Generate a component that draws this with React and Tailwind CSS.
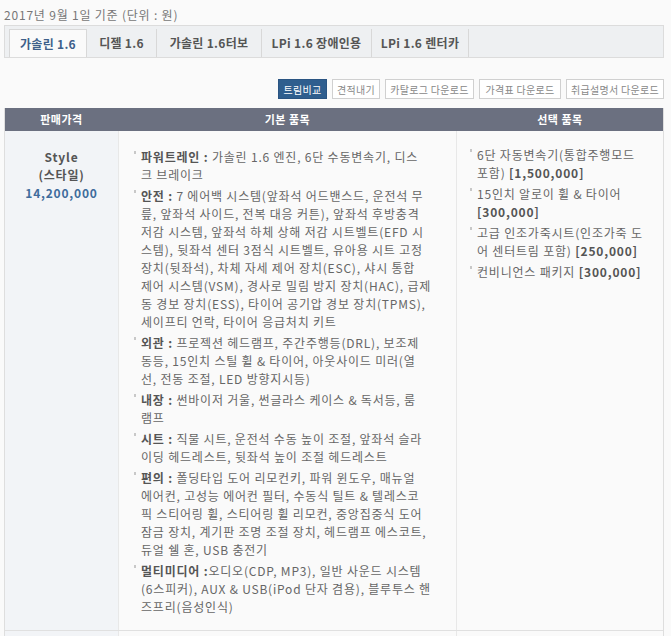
import React from 'react';

const tabs = [
  { label: '가솔린 1.6', w: 'w-[78px]', active: true },
  { label: '디젤 1.6', w: 'w-[70px]' },
  { label: '가솔린 1.6터보', w: 'w-[105px]' },
  { label: 'LPi 1.6 장애인용', w: 'w-[110px]' },
  { label: 'LPi 1.6 렌터카', w: 'w-[97px]' },
];

const buttons = [
  { label: '트림비교', w: 'w-[49px]', active: true },
  { label: '견적내기', w: 'w-[48px]' },
  { label: '카탈로그 다운로드', w: 'w-[89px]' },
  { label: '가격표 다운로드', w: 'w-[82px]' },
  { label: '취급설명서 다운로드', w: 'w-[98px]' },
];

const basicItems = [
  {
    label: '파워트레인 :',
    lines: [' 가솔린 1.6 엔진, 6단 수동변속기, 디스', '크 브레이크'],
  },
  {
    label: '안전 :',
    lines: [
      ' 7 에어백 시스템(앞좌석 어드밴스드, 운전석 무',
      '릎, 앞좌석 사이드, 전복 대응 커튼), 앞좌석 후방충격',
      '저감 시스템, 앞좌석 하체 상해 저감 시트벨트(EFD 시',
      '스템), 뒷좌석 센터 3점식 시트벨트, 유아용 시트 고정',
      '장치(뒷좌석), 차체 자세 제어 장치(ESC), 샤시 통합',
      '제어 시스템(VSM), 경사로 밀림 방지 장치(HAC), 급제',
      '동 경보 장치(ESS), 타이어 공기압 경보 장치(TPMS),',
      '세이프티 언락, 타이어 응급처치 키트',
    ],
  },
  {
    label: '외관 :',
    lines: [
      ' 프로젝션 헤드램프, 주간주행등(DRL), 보조제',
      '동등, 15인치 스틸 휠 & 타이어, 아웃사이드 미러(열',
      '선, 전동 조절, LED 방향지시등)',
    ],
  },
  {
    label: '내장 :',
    lines: [' 썬바이저 거울, 썬글라스 케이스 & 독서등, 룸', '램프'],
  },
  {
    label: '시트 :',
    lines: [' 직물 시트, 운전석 수동 높이 조절, 앞좌석 슬라', '이딩 헤드레스트, 뒷좌석 높이 조절 헤드레스트'],
  },
  {
    label: '편의 :',
    lines: [
      ' 폴딩타입 도어 리모컨키, 파워 윈도우, 매뉴얼',
      '에어컨, 고성능 에어컨 필터, 수동식 틸트 & 텔레스코',
      '픽 스티어링 휠, 스티어링 휠 리모컨, 중앙집중식 도어',
      '잠금 장치, 계기판 조명 조절 장치, 헤드램프 에스코트,',
      '듀얼 쉘 혼, USB 충전기',
    ],
  },
  {
    label: '멀티미디어 :',
    lines: [
      '오디오(CDP, MP3), 일반 사운드 시스템',
      '(6스피커), AUX & USB(iPod 단자 겸용), 블루투스 핸',
      '즈프리(음성인식)',
    ],
  },
];

const options = [
  { lines: ['6단 자동변속기(통합주행모드', '포함) '], price: '[1,500,000]' },
  { lines: ['15인치 알로이 휠 & 타이어', ''], price: '[300,000]' },
  { lines: ['고급 인조가죽시트(인조가죽 도', '어 센터트림 포함) '], price: '[250,000]' },
  { lines: ['컨비니언스 패키지 '], price: '[300,000]' },
];

function Bullet() {
  return <span className="mt-[3px] h-[3px] w-[2px] shrink-0 bg-[#c8c8c8]" />;
}

function BasicItem({ item }) {
  return (
    <li className="flex gap-[5px]">
      <Bullet />
      <div className="whitespace-pre">
        {item.lines.map((line, i) => (
          <div key={i}>
            {i === 0 && <b className="font-bold text-[#555]">{item.label}</b>}
            {line}
          </div>
        ))}
      </div>
    </li>
  );
}

function OptionItem({ item }) {
  const last = item.lines.length - 1;
  return (
    <li className="flex gap-[5px]">
      <Bullet />
      <div className="whitespace-pre">
        {item.lines.map((line, i) => (
          <div key={i}>
            {line}
            {i === last && <b className="font-bold text-[#555]">{item.price}</b>}
          </div>
        ))}
      </div>
    </li>
  );
}

export default function App() {
  return (
    <div className="min-h-screen bg-[#fafafa] px-[4px] pt-[7px] font-['Noto_Sans_CJK_KR','Noto_Sans',sans-serif] text-[12px] text-[#666]">
      <p className="leading-[16px] tracking-[0.8px] text-[#777]">2017년 9월 1일 기준 (단위 : 원)</p>

      {/* tabs */}
      <div className="mt-[2px] flex h-[33px] w-[660px] items-end border border-[#dcdcdc] bg-[#eef0f2] pl-[4px]">
        {tabs.map((t) => (
          <div
            key={t.label}
            className={`flex h-[28px] items-center justify-center border-r border-[#d8d8d8] text-[12px] font-bold tracking-[0.3px] ${t.w} ${
              t.active ? 'border-t border-l bg-[#fafafa] text-[#3d5f8a]' : 'text-[#555]'
            }`}
          >
            {t.label}
          </div>
        ))}
      </div>

      {/* action buttons */}
      <div className="mt-[21px] flex w-[660px] justify-end gap-[5px]">
        {buttons.map((b) => (
          <button
            key={b.label}
            className={`flex h-[20px] items-center justify-center border text-[10px] tracking-[0.3px] ${b.w} ${
              b.active ? 'border-[#2a5482] bg-[#2f5e8e] text-white' : 'border-[#d0d0d0] bg-white text-[#888]'
            }`}
          >
            {b.label}
          </button>
        ))}
      </div>

      {/* trim table */}
      <div className="mt-[9px] w-[660px] border-x border-[#dedede]">
        <div className="grid h-[23px] grid-cols-[113px_339px_1fr] bg-[#6b7080] text-[11px] font-bold leading-[23px] tracking-[0.5px] text-white">
          <div className="text-center">판매가격</div>
          <div className="text-center">기본 품목</div>
          <div className="text-center">선택 품목</div>
        </div>

        <div className="grid grid-cols-[113px_339px_1fr] border-b border-[#e0e0e0] leading-[18px] tracking-[0.8px]">
          <div className="bg-[#f2f4f7] pt-[17px] text-center font-bold text-[#555]">
            <div>Style</div>
            <div>(스타일)</div>
            <div className="text-[#3f6c9c]">14,200,000</div>
          </div>
          <div className="border-x border-[#e8e8e8] pb-[14px] pl-[15px] pt-[17px]">
            <ul className="flex flex-col gap-[3px]">
              {basicItems.map((item) => (
                <BasicItem key={item.label} item={item} />
              ))}
            </ul>
          </div>
          <div className="pl-[13px] pt-[15px]">
            <ul className="flex flex-col gap-[3px]">
              {options.map((item) => (
                <OptionItem key={item.price + item.lines[0]} item={item} />
              ))}
            </ul>
          </div>
        </div>

        <div className="grid h-[20px] grid-cols-[113px_339px_1fr]">
          <div className="bg-[#f2f4f7]" />
          <div className="border-x border-[#e8e8e8]" />
          <div />
        </div>
      </div>
    </div>
  );
}
